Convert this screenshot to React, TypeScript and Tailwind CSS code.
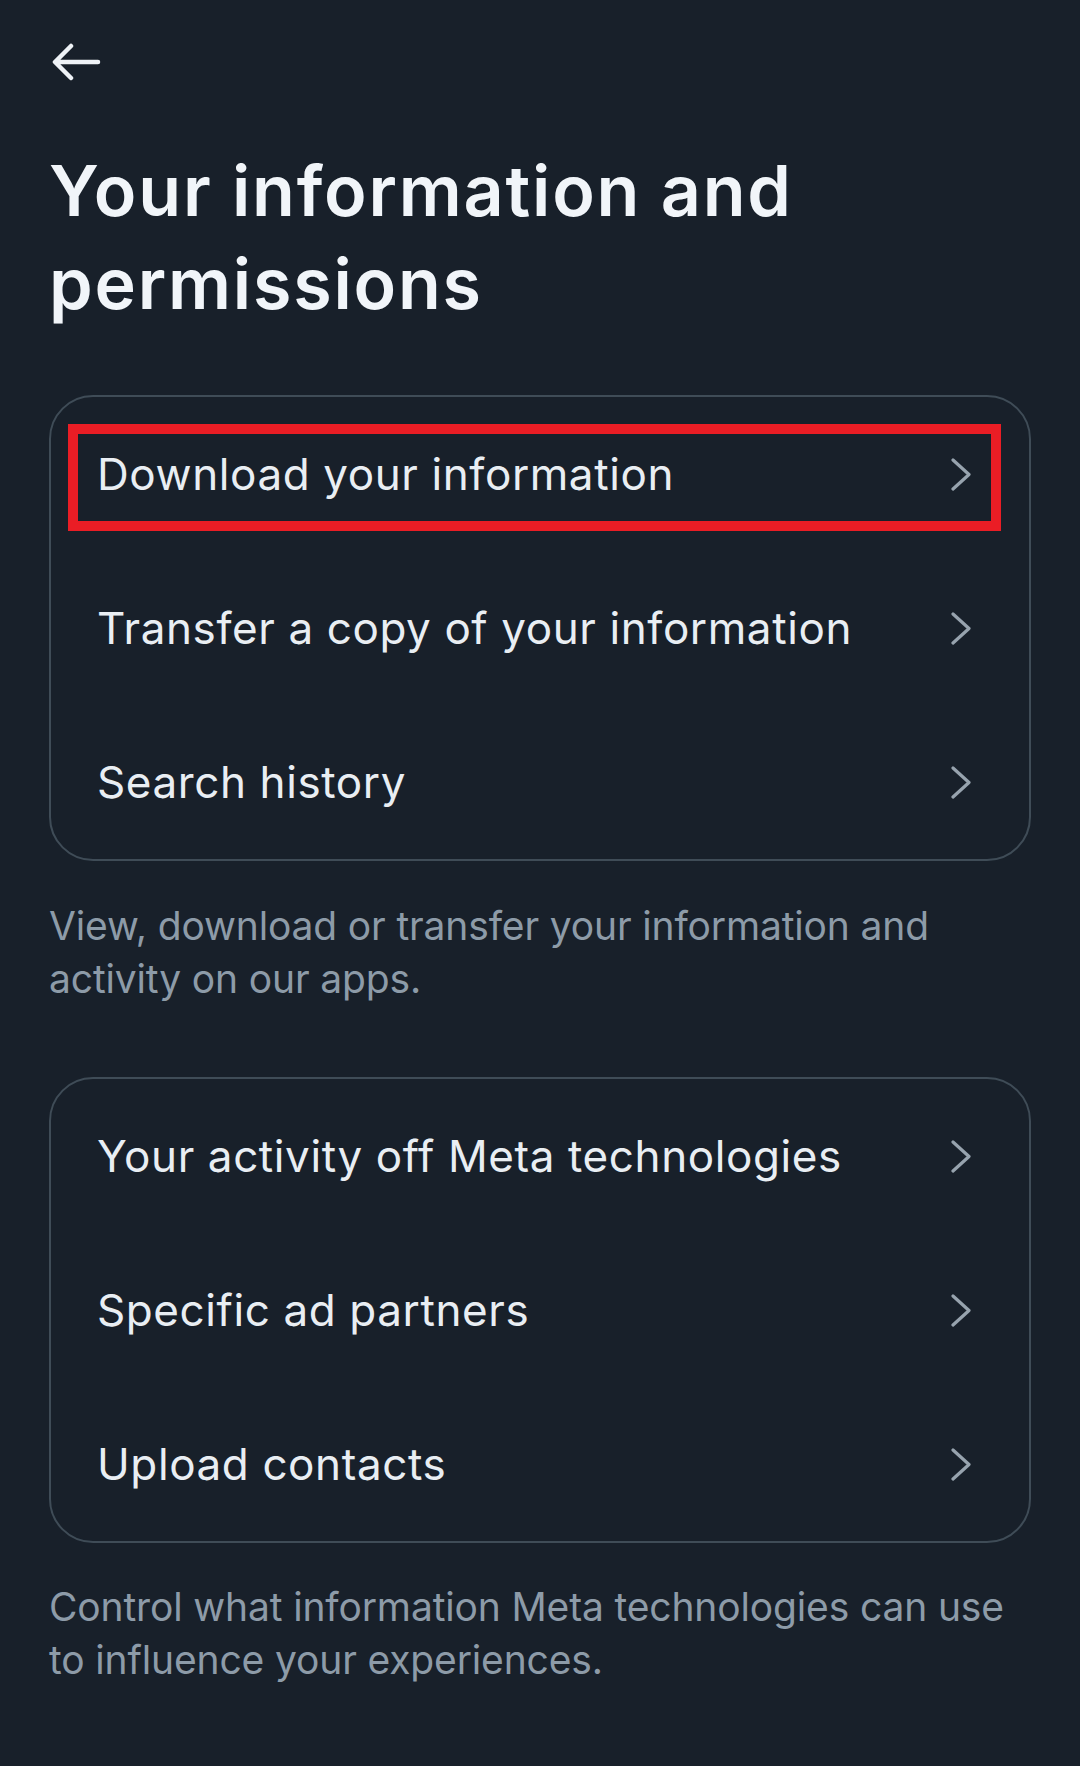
const font = { fontFamily: "Inter, 'Noto Sans', sans-serif" };

const dataRows = ["Download your information", "Transfer a copy of your information", "Search history"];
const adRows = ["Your activity off Meta technologies", "Specific ad partners", "Upload contacts"];

function BackArrow() {
  return (
    <svg width="50" height="38" viewBox="0 0 50 38" fill="none">
      <path
        d="M46 19H4M19 3L3 19L19 35"
        stroke="#eef2f6"
        strokeWidth="4.5"
        strokeLinecap="round"
        strokeLinejoin="round"
      />
    </svg>
  );
}

function Chevron() {
  return (
    <svg width="22" height="33" viewBox="0 0 22 33" fill="none">
      <path d="M3 2L19 16.5L3 31" stroke="#97a3ae" strokeWidth="3.2" strokeLinecap="round" strokeLinejoin="round" />
    </svg>
  );
}

function Row({ label, highlight }: { label: string; highlight?: boolean }) {
  return (
    <div className="relative flex h-[154px] items-center justify-between pl-[46px] pr-[57px]">
      <span className="text-[44px] leading-[53px] tracking-[0.6px] text-[#e9eef3]">{label}</span>
      <Chevron />
      {highlight && (
        <div className="pointer-events-none absolute left-[17px] top-[27px] h-[107px] w-[933px] border-[10px] border-[#ea1d25]" />
      )}
    </div>
  );
}

function Card({ rows, highlightFirst }: { rows: string[]; highlightFirst?: boolean }) {
  return (
    <div className="rounded-[44px] border-2 border-[#3f4c57]">
      {rows.map((r, i) => (
        <Row key={r} label={r} highlight={highlightFirst && i === 0} />
      ))}
    </div>
  );
}

export default function App() {
  return (
    <div className="h-[1766px] w-[1080px] bg-[#18202a] pl-[49px] pr-[49px] pt-[43px]" style={font}>
      <div className="ml-[3px]">
        <BackArrow />
      </div>

      <h1 className="mt-[63px] text-[70px] font-semibold leading-[93px] tracking-[1.8px] text-[#f1f5f9]">
        Your information and
        <br />
        permissions
      </h1>

      <div className="mt-[65px]">
        <Card rows={dataRows} highlightFirst />
      </div>

      <p className="mt-[38px] text-[39px] leading-[53px] tracking-[-0.15px] text-[#8d9ba8]">
        View, download or transfer your information and activity on our apps.
      </p>

      <div className="mt-[72px]">
        <Card rows={adRows} />
      </div>

      <p className="mt-[37px] text-[39px] leading-[53px] tracking-[-0.15px] text-[#8d9ba8]">
        Control what information Meta technologies can use to influence your experiences.
      </p>
    </div>
  );
}
